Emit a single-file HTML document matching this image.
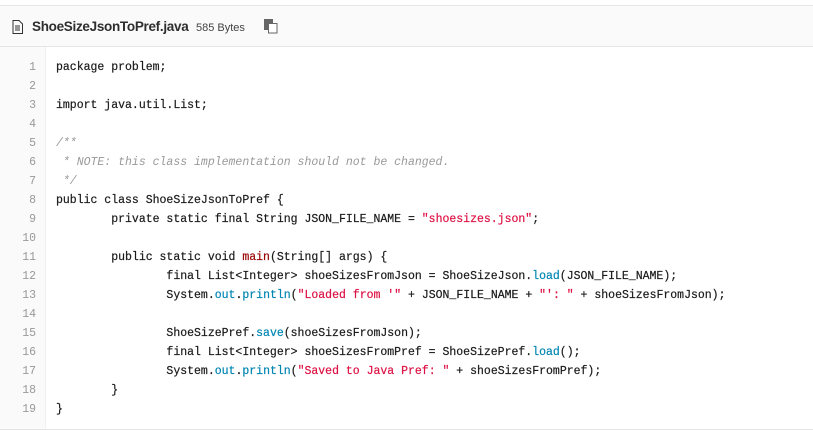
<!DOCTYPE html>
<html><head><style>
body{margin:0;background:#fff;width:813px;height:430px;overflow:hidden;font-family:"Liberation Sans",sans-serif}
.box{position:absolute;left:0;top:5px;width:813px;height:423px;border-top:1px solid #e5e5e5;border-bottom:1px solid #e5e5e5}
.hd{position:absolute;left:0;top:0;width:813px;height:40px;background:#fafafa;border-bottom:1px solid #e5e5e5}
.ttl{position:absolute;left:32px;top:13px;font-size:13.5px;font-weight:bold;color:#2e2e2e;letter-spacing:-0.3px}
.sz{position:absolute;left:196px;top:16px;font-size:11px;color:#444}
.gut{position:absolute;left:0;top:41px;width:45px;bottom:0;background:#fafafa;border-right:1px solid #f0f0f0}
.code{position:absolute;left:0;top:52px;font-family:"Liberation Mono",monospace;font-size:11.5px;line-height:19px;color:#1a1a1a;white-space:pre;-webkit-text-stroke:0.2px #1a1a1a}
.ln{display:inline-block;width:36px;text-align:right;color:#999;margin-right:20px;-webkit-text-stroke:0}
.s{color:#dd1144;-webkit-text-stroke:0.2px #dd1144}.c{color:#999;font-style:italic;-webkit-text-stroke:0}.t{color:#0086b3;-webkit-text-stroke:0.2px #0086b3}.f{color:#990000;-webkit-text-stroke:0.2px #990000}
</style></head><body>
<div class="box">
<div class="hd">
<svg style="position:absolute;left:12px;top:14px" width="11" height="14" viewBox="0 0 11 14"><path d="M1 .5h6l3.5 3.5v9.5h-9.5z" fill="none" stroke="#333"/><path d="M3 6h5M3 8h5M3 10h5" stroke="#333"/></svg>
<div class="ttl">ShoeSizeJsonToPref.java</div>
<div class="sz">585 Bytes</div>
<svg style="position:absolute;left:264px;top:13px" width="14" height="15" viewBox="0 0 14 15"><rect x="0" y="0" width="9" height="11" fill="#666"/><rect x="4.5" y="4.5" width="8.5" height="9.5" fill="#fff" stroke="#666"/></svg>
</div>
<div class="gut"></div>
<div class="code"><span class="ln">1</span>package problem;
<span class="ln">2</span>
<span class="ln">3</span>import java.util.List;
<span class="ln">4</span>
<span class="ln">5</span><span class="c">/**</span>
<span class="ln">6</span><span class="c"> * NOTE: this class implementation should not be changed.</span>
<span class="ln">7</span><span class="c"> */</span>
<span class="ln">8</span>public class ShoeSizeJsonToPref {
<span class="ln">9</span>        private static final String JSON_FILE_NAME = <span class="s">"shoesizes.json"</span>;
<span class="ln">10</span>
<span class="ln">11</span>        public static void <span class="f">main</span>(String[] args) {
<span class="ln">12</span>                final List&lt;Integer&gt; shoeSizesFromJson = ShoeSizeJson.<span class="t">load</span>(JSON_FILE_NAME);
<span class="ln">13</span>                System.<span class="t">out</span>.<span class="t">println</span>(<span class="s">"Loaded from '"</span> + JSON_FILE_NAME + <span class="s">"': "</span> + shoeSizesFromJson);
<span class="ln">14</span>
<span class="ln">15</span>                ShoeSizePref.<span class="t">save</span>(shoeSizesFromJson);
<span class="ln">16</span>                final List&lt;Integer&gt; shoeSizesFromPref = ShoeSizePref.<span class="t">load</span>();
<span class="ln">17</span>                System.<span class="t">out</span>.<span class="t">println</span>(<span class="s">"Saved to Java Pref: "</span> + shoeSizesFromPref);
<span class="ln">18</span>        }
<span class="ln">19</span>}</div>
</div>
</body></html>
